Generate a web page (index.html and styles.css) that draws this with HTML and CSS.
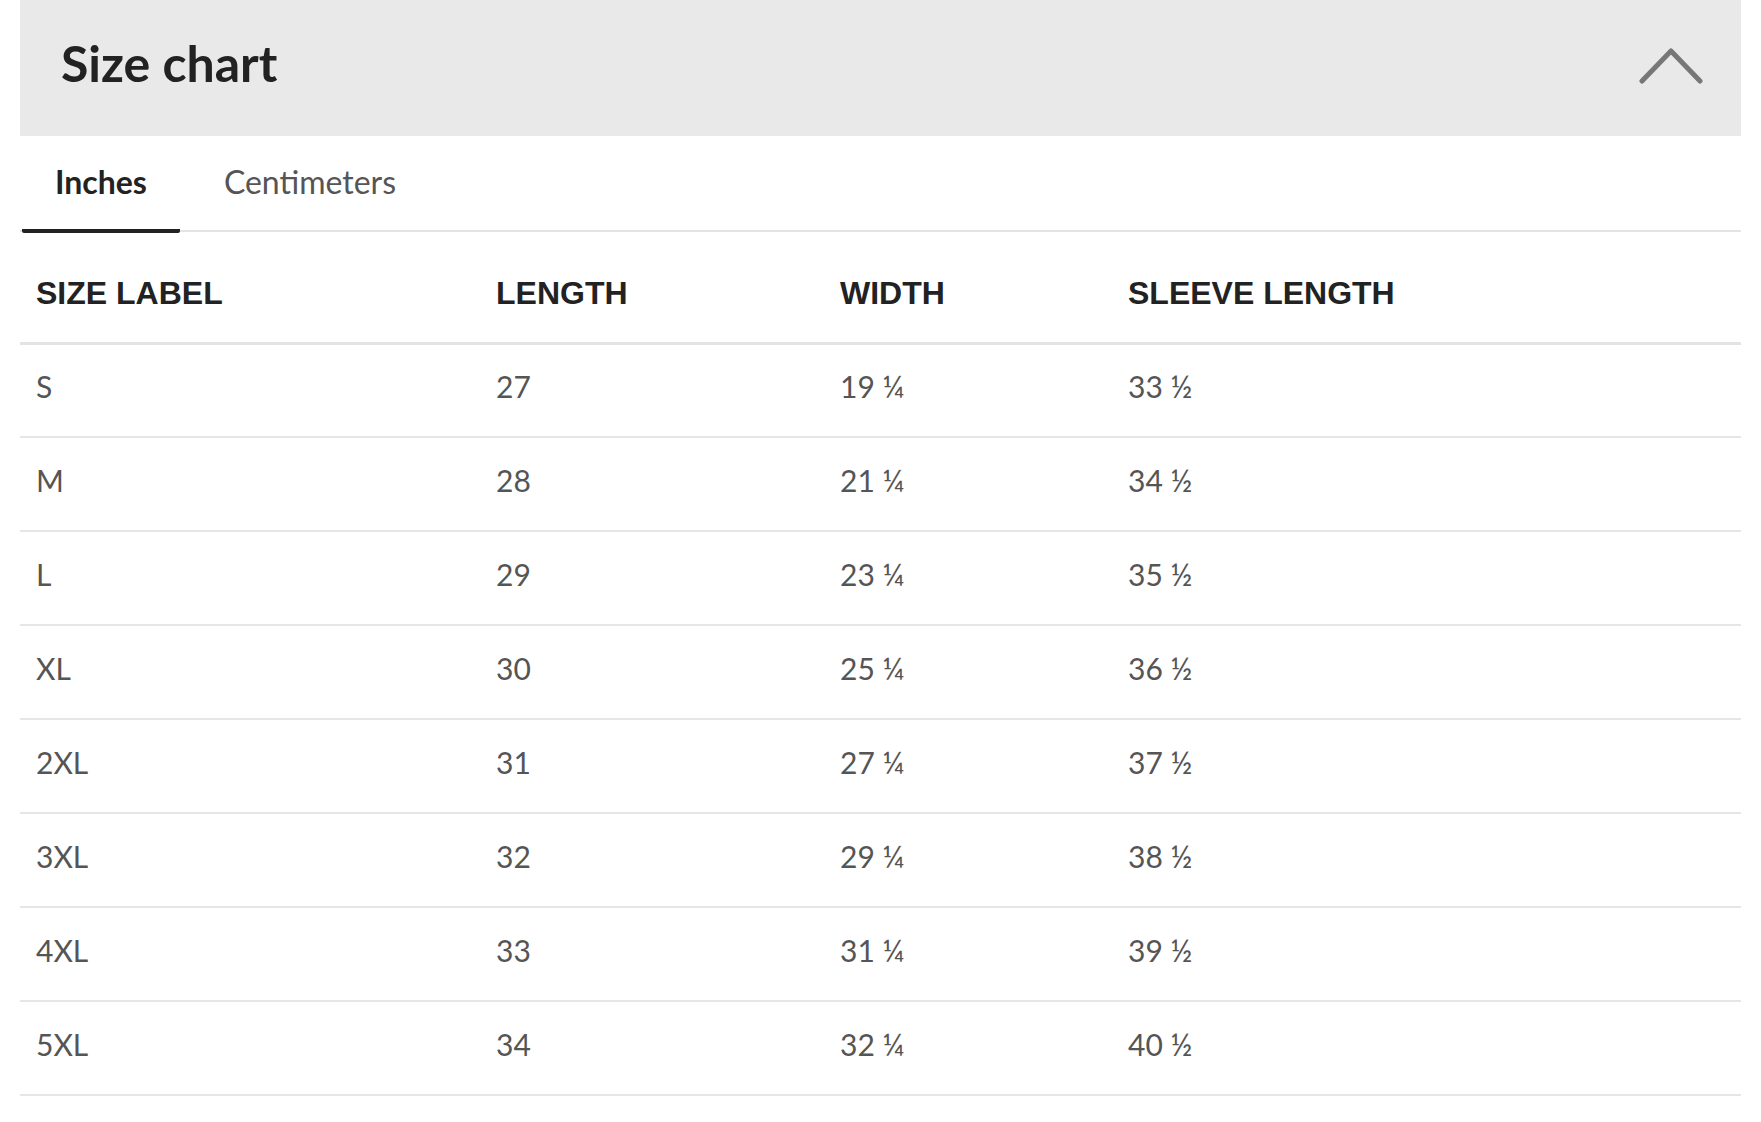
FILE: index.html
```html
<!DOCTYPE html>
<html lang="en">
<head>
<meta charset="utf-8">
<title>Size chart</title>
<link rel="stylesheet" href="styles.css">
</head>
<body>
<div class="panel">
  <div class="panel-head">
    <h2 class="title">Size chart</h2>
    <svg class="chevron" width="64" height="40" viewBox="0 0 64 40" aria-hidden="true">
      <path d="M3 36 L32 6 L61 36" fill="none" stroke="#777" stroke-width="5" stroke-linecap="round" stroke-linejoin="round"/>
    </svg>
  </div>
  <div class="tabs">
    <div class="tab active">Inches</div>
    <div class="tab">Centimeters</div>
  </div>
  <table class="chart">
    <thead>
      <tr><th>SIZE LABEL</th><th>LENGTH</th><th>WIDTH</th><th>SLEEVE LENGTH</th></tr>
    </thead>
    <tbody>
      <tr><td>S</td><td>27</td><td>19 ¼</td><td>33 ½</td></tr>
      <tr><td>M</td><td>28</td><td>21 ¼</td><td>34 ½</td></tr>
      <tr><td>L</td><td>29</td><td>23 ¼</td><td>35 ½</td></tr>
      <tr><td>XL</td><td>30</td><td>25 ¼</td><td>36 ½</td></tr>
      <tr><td>2XL</td><td>31</td><td>27 ¼</td><td>37 ½</td></tr>
      <tr><td>3XL</td><td>32</td><td>29 ¼</td><td>38 ½</td></tr>
      <tr><td>4XL</td><td>33</td><td>31 ¼</td><td>39 ½</td></tr>
      <tr><td>5XL</td><td>34</td><td>32 ¼</td><td>40 ½</td></tr>
    </tbody>
  </table>
</div>
</body>
</html>
```

FILE: styles.css
```css
html, body {
  margin: 0;
  padding: 0;
  background: #fff;
}

.panel {
  margin-left: 20px;
  width: 1721px;
  font-family: Lato, "Open Sans", sans-serif;
}

.panel-head {
  height: 136px;
  background: #e9e9e9;
  display: flex;
  align-items: center;
  justify-content: space-between;
  padding: 0 38px 0 41px;
  box-sizing: border-box;
}

.title {
  margin: 0 0 10px 0;
  font-size: 50px;
  font-weight: 700;
  color: #222;
  line-height: 1;
}

.chevron {
  display: block;
  margin-bottom: 6px;
}

.tabs {
  display: flex;
  gap: 11px;
  height: 94px;
  border-bottom: 2px solid #e3e3e3;
  padding-left: 2px;
}

.tab {
  display: flex;
  align-items: center;
  padding: 0 33px 3px;
  font-size: 32px;
  color: #555;
  box-sizing: border-box;
}

.tab.active {
  font-weight: 700;
  color: #222;
  border-bottom: 4px solid #222;
  border-radius: 2px;
  margin-bottom: -3px;
}

.chart {
  width: 100%;
  border-collapse: collapse;
  table-layout: fixed;
}

.chart th,
.chart td {
  text-align: left;
  padding: 0 0 0 16px;
}

.chart th:nth-child(1) { width: 460px; }
.chart th:nth-child(2) { width: 344px; }
.chart th:nth-child(3) { width: 288px; }

.chart th {
  font-family: "Liberation Sans", Arial, sans-serif;
  font-weight: 700;
  font-size: 32px;
  color: #222;
  height: 111px;
  padding-top: 14px;
  box-sizing: border-box;
  border-bottom: 3px solid #e3e3e3;
}

.chart td {
  font-size: 30px;
  color: #555;
  height: 94px;
  padding-bottom: 8px;
  box-sizing: border-box;
  border-bottom: 2px solid #e6e6e6;
}
```
